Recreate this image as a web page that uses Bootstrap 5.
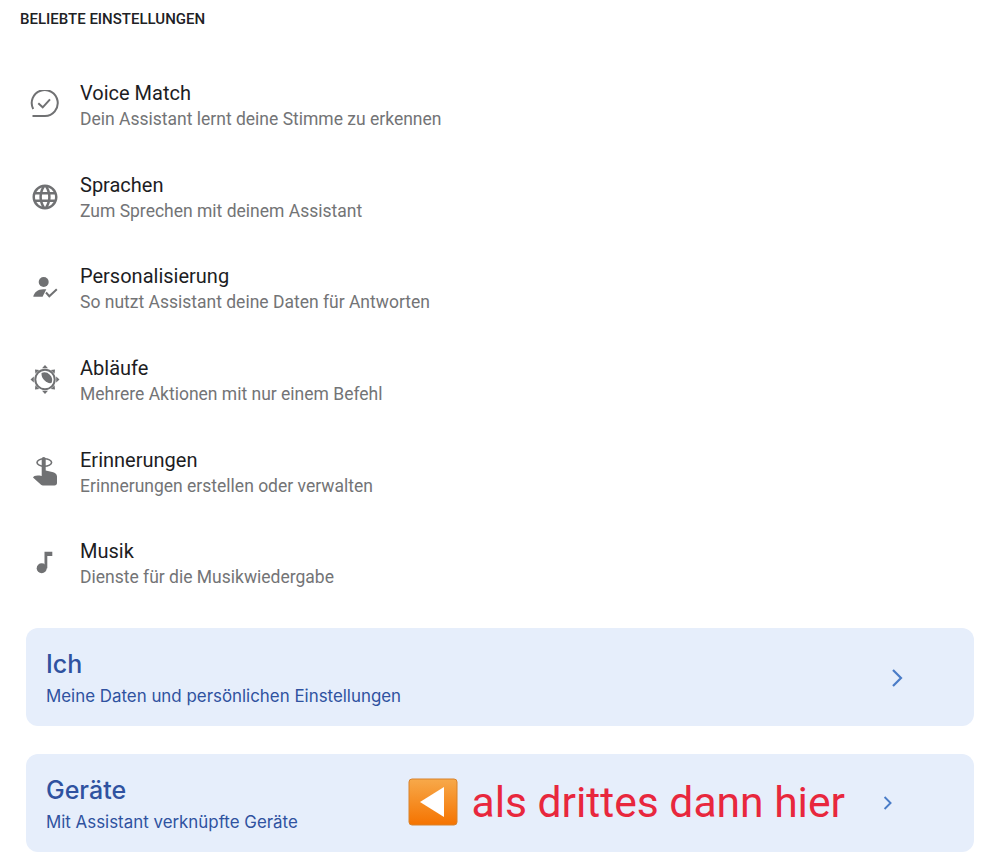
<!DOCTYPE html>
<html lang="de">
  <head>
    <meta charset="UTF-8" />
    <meta name="viewport" content="width=device-width, initial-scale=1.0" />
    <title>Beliebte Einstellungen</title>
    <link href="https://cdn.jsdelivr.net/npm/bootstrap@5.3.2/dist/css/bootstrap.min.css" rel="stylesheet" />
    <style>
      body {
        font-family: Roboto, "Liberation Sans", sans-serif;
        background: #fff;
        height: 863px;
        overflow: hidden;
      }
      .section-head {
        font-size: 15px;
        line-height: 18px;
        font-weight: 500;
        color: #202124;
        padding: 10px 0 0 20px;
        margin-bottom: 31px;
      }
      .setting-row {
        height: 91.7px;
        padding-left: 30px;
      }
      .setting-icon {
        width: 30px;
        height: 30px;
        margin-right: 20px;
        flex-shrink: 0;
        fill: #707173;
      }
      .setting-title {
        font-size: 20px;
        line-height: 26px;
        padding-top: 1px;
        color: #1d1d1f;
      }
      .setting-sub {
        font-size: 17.5px;
        line-height: 24px;
        margin-top: 1px;
        color: #737476;
      }
      .link-card {
        height: 98px;
        margin: 0 24px 28px 26px;
        padding: 2px 20px 0;
        background: #e6eefb;
        border-radius: 12px;
        color: #2f52a0;
      }
      .first-card {
        margin-top: 19px;
      }
      .card-title-text {
        font-family: Inter, Roboto, sans-serif;
        font-size: 25px;
        line-height: 30px;
        font-weight: 500;
      }
      .card-sub-text {
        font-family: Inter, Roboto, sans-serif;
        font-size: 16.9px;
        line-height: 24px;
        margin-top: 5px;
      }
      .chevron {
        fill: none;
        stroke: #4a7cc7;
        stroke-width: 2.2;
      }
      .chevron-first {
        width: 16px;
        height: 22px;
        margin-right: 49px;
      }
      .chevron-small {
        width: 12px;
        height: 18px;
        margin: -2px 60px 0 37px;
      }
      .note-group {
        margin-top: -4px;
      }
      .note-text {
        font-size: 42.6px;
        line-height: 50px;
        color: #e8273d;
      }
      .note-icon {
        width: 50px;
        height: 48px;
        margin-right: 13px;
      }
    </style>
  </head>
  <body>
    <div class="section-head">BELIEBTE EINSTELLUNGEN</div>

    <div class="d-flex align-items-center setting-row">
      <svg class="setting-icon" viewBox="0 0 30 30"><path d="M3.2 19A13 13 0 1 1 15 26H2.5" fill="none" stroke="#707173" stroke-width="2"/><path d="M8.3 13.3l4.4 4 7.3-8" fill="none" stroke="#707173" stroke-width="2"/></svg>
      <div>
        <div class="setting-title">Voice Match</div>
        <div class="setting-sub">Dein Assistant lernt deine Stimme zu erkennen</div>
      </div>
    </div>

    <div class="d-flex align-items-center setting-row">
      <svg class="setting-icon" viewBox="0 0 24 24"><path d="M11.99 2C6.47 2 2 6.48 2 12s4.47 10 9.99 10C17.52 22 22 17.52 22 12S17.52 2 11.99 2zm6.93 6h-2.95a15.65 15.65 0 0 0-1.38-3.56A8.03 8.03 0 0 1 18.92 8zM12 4.04c.83 1.2 1.48 2.53 1.91 3.96h-3.82c.43-1.43 1.08-2.76 1.91-3.96zM4.26 14C4.1 13.36 4 12.69 4 12s.1-1.36.26-2h3.38c-.08.66-.14 1.32-.14 2s.06 1.34.14 2H4.26zm.82 2h2.95c.32 1.25.78 2.45 1.38 3.56A7.987 7.987 0 0 1 5.08 16zm2.95-8H5.08a7.987 7.987 0 0 1 4.33-3.56A15.65 15.65 0 0 0 8.03 8zM12 19.96c-.83-1.2-1.48-2.53-1.91-3.96h3.82c-.43 1.43-1.08 2.76-1.91 3.96zM14.34 14H9.66c-.09-.66-.16-1.32-.16-2s.07-1.35.16-2h4.68c.09.65.16 1.32.16 2s-.07 1.34-.16 2zm.25 5.56c.6-1.11 1.06-2.31 1.38-3.56h2.95a8.03 8.03 0 0 1-4.33 3.56zM16.36 14c.08-.66.14-1.32.14-2s-.06-1.34-.14-2h3.38c.16.64.26 1.31.26 2s-.1 1.36-.26 2h-3.38z"/></svg>
      <div>
        <div class="setting-title">Sprachen</div>
        <div class="setting-sub">Zum Sprechen mit deinem Assistant</div>
      </div>
    </div>

    <div class="d-flex align-items-center setting-row">
      <svg class="setting-icon" viewBox="0 0 30 30"><circle cx="13.7" cy="9" r="5"/><path d="M3.3 23.7c.5-4 4.5-7.5 10-7.5h3l-3.7 7.5z"/><path d="M16 19.5l3.3 3.7 7.5-7" fill="none" stroke="#707173" stroke-width="2"/></svg>
      <div>
        <div class="setting-title">Personalisierung</div>
        <div class="setting-sub">So nutzt Assistant deine Daten für Antworten</div>
      </div>
    </div>

    <div class="d-flex align-items-center setting-row">
      <svg class="setting-icon" viewBox="0 0 30 30"><circle cx="15" cy="14.5" r="9.7" fill="none" stroke="#707173" stroke-width="2"/><path d="M11.5 8a7.7 7.7 0 0 1 10 10C17 19 11 14 11.5 8z"/><path d="M15 0l3 3.3h-6zM15 29l-3-3.3h6zM.5 14.5l3.3-3v6zM29.5 14.5l-3.3 3v-6zM5 4.5l4.2.4-3.8 3.8zM25 24.5l-4.2-.4 3.8-3.8zM25 4.5l-.4 4.2-3.8-3.8zM5 24.5l.4-4.2 3.8 3.8z"/></svg>
      <div>
        <div class="setting-title">Abläufe</div>
        <div class="setting-sub">Mehrere Aktionen mit nur einem Befehl</div>
      </div>
    </div>

    <div class="d-flex align-items-center setting-row">
      <svg class="setting-icon" viewBox="0 0 30 30"><ellipse cx="14.3" cy="5.5" rx="7.3" ry="3.7" fill="none" stroke="#707173" stroke-width="1.6"/><path d="M11.7 2a2 2 0 0 1 4 0V13.5l6.5 1.5c2.5.6 4.8 2 4.8 4.5V26c0 1.500-1 2.500-2.500 2.500H14c-1.500 0-2.800-.5-3.800-1.500L3 20.500c.8-1.500 3-2.500 8.700-1.500z"/></svg>
      <div>
        <div class="setting-title">Erinnerungen</div>
        <div class="setting-sub">Erinnerungen erstellen oder verwalten</div>
      </div>
    </div>

    <div class="d-flex align-items-center setting-row">
      <svg class="setting-icon" viewBox="0 0 30 30"><circle cx="11.7" cy="20.3" r="5"/><path d="M14.5 3.7H22.3V8H17.3V20.3H14.5z"/></svg>
      <div>
        <div class="setting-title">Musik</div>
        <div class="setting-sub">Dienste für die Musikwiedergabe</div>
      </div>
    </div>

    <div class="d-flex align-items-center justify-content-between link-card first-card">
      <div>
        <div class="card-title-text">Ich</div>
        <div class="card-sub-text">Meine Daten und persönlichen Einstellungen</div>
      </div>
      <svg class="chevron chevron-first" viewBox="0 0 16 22"><path d="M4 3l8 8-8 8"/></svg>
    </div>

    <div class="d-flex align-items-center link-card">
      <div>
        <div class="card-title-text">Geräte</div>
        <div class="card-sub-text">Mit Assistant verknüpfte Geräte</div>
      </div>
      <div class="d-flex align-items-center ms-auto note-group">
        <svg class="note-icon" viewBox="0 0 50 48">
          <defs><linearGradient id="orangeFill" x1="0" y1="0" x2="0" y2="1"><stop offset="0" stop-color="#f7a94a"/><stop offset="1" stop-color="#f57300"/></linearGradient></defs>
          <rect x="1" y="1" width="48" height="46" rx="3" fill="url(#orangeFill)" stroke="#d9822b"/>
          <path d="M36 9v30L12 24z" fill="#fff"/>
        </svg>
        <span class="note-text">als drittes dann hier</span>
      </div>
      <svg class="chevron chevron-small" viewBox="0 0 14 20"><path d="M3 3l7 7-7 7"/></svg>
    </div>
    <script src="https://cdn.jsdelivr.net/npm/bootstrap@5.3.2/dist/js/bootstrap.bundle.min.js"></script>
  </body>
</html>
